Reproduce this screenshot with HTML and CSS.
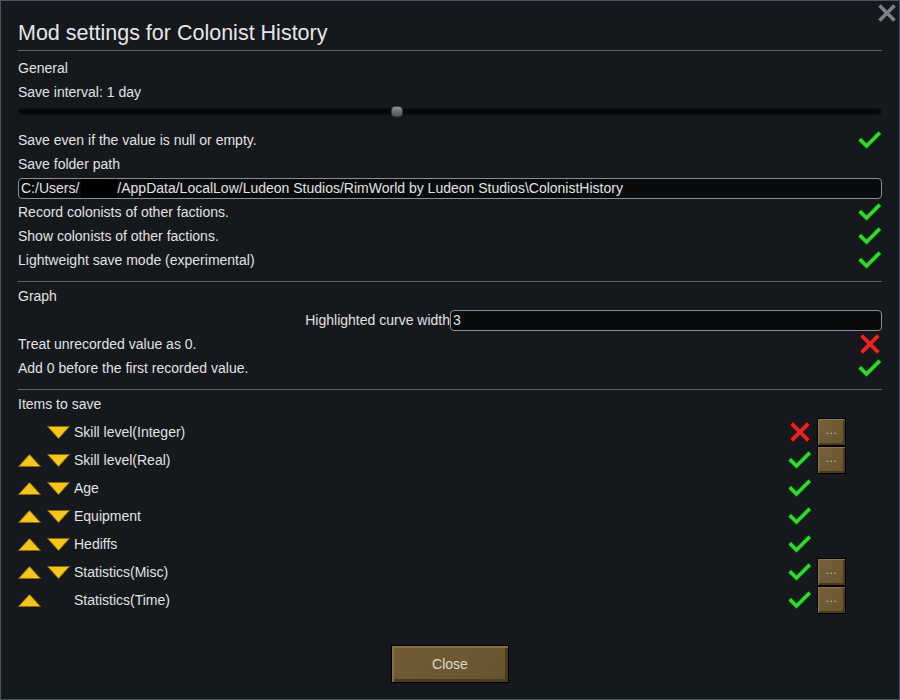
FILE: index.html
```html
<!DOCTYPE html>
<html>
<head>
<meta charset="utf-8">
<link rel="stylesheet" href="styles.css">
</head>
<body>
<div class="window">
  <div class="close-x">
    <svg viewBox="0 0 20 20" width="20" height="20"><path d="M2.5 2.5 L17.5 17.5 M17.5 2.5 L2.5 17.5" stroke="#7f8184" stroke-width="3.6" fill="none"/></svg>
  </div>
  <h1 class="title">Mod settings for Colonist History</h1>
  <div class="sep sep-top"></div>

  <div class="row"><span>General</span></div>
  <div class="row"><span>Save interval: 1 day</span></div>
  <div class="slider"><div class="track"><div class="handle" style="left: 43.2%"></div></div></div>
  <div class="row"><span>Save even if the value is null or empty.</span>
    <svg class="icon" viewBox="0 0 24 24"><polyline points="3,12.5 8.5,18 20.5,6" class="chk-o"/><polyline points="3,12.5 8.5,18 20.5,6" class="chk-i"/></svg>
  </div>
  <div class="row"><span>Save folder path</span></div>
  <div class="row-field"><div class="field">C:/Users/<span class="redact"></span>/AppData/LocalLow/Ludeon Studios/RimWorld by Ludeon Studios\ColonistHistory</div></div>
  <div class="row"><span>Record colonists of other factions.</span>
    <svg class="icon" viewBox="0 0 24 24"><polyline points="3,12.5 8.5,18 20.5,6" class="chk-o"/><polyline points="3,12.5 8.5,18 20.5,6" class="chk-i"/></svg>
  </div>
  <div class="row"><span>Show colonists of other factions.</span>
    <svg class="icon" viewBox="0 0 24 24"><polyline points="3,12.5 8.5,18 20.5,6" class="chk-o"/><polyline points="3,12.5 8.5,18 20.5,6" class="chk-i"/></svg>
  </div>
  <div class="row"><span>Lightweight save mode (experimental)</span>
    <svg class="icon" viewBox="0 0 24 24"><polyline points="3,12.5 8.5,18 20.5,6" class="chk-o"/><polyline points="3,12.5 8.5,18 20.5,6" class="chk-i"/></svg>
  </div>

  <div class="sep sep-mid"></div>
  <div class="row"><span>Graph</span></div>
  <div class="half-row">
    <span class="half-label">Highlighted curve width</span>
    <div class="field">3</div>
  </div>
  <div class="row"><span>Treat unrecorded value as 0.</span>
    <svg class="icon" viewBox="0 0 24 24"><path d="M5 5 L19 19 M19 5 L5 19" class="x-o"/><path d="M5 5 L19 19 M19 5 L5 19" class="x-i"/></svg>
  </div>
  <div class="row"><span>Add 0 before the first recorded value.</span>
    <svg class="icon" viewBox="0 0 24 24"><polyline points="3,12.5 8.5,18 20.5,6" class="chk-o"/><polyline points="3,12.5 8.5,18 20.5,6" class="chk-i"/></svg>
  </div>

  <div class="sep sep-mid"></div>
  <div class="row"><span>Items to save</span></div>

  <div class="items">
    <div class="item">
      <span></span>
      <svg class="arrow down" viewBox="0 0 23 13"><polygon points="0.5,0.5 22.5,0.5 11.5,12.5"/></svg>
      <span class="label">Skill level(Integer)</span>
      <svg class="icon" viewBox="0 0 24 24"><path d="M5 5 L19 19 M19 5 L5 19" class="x-o"/><path d="M5 5 L19 19 M19 5 L5 19" class="x-i"/></svg>
      <div class="dots">...</div>
    </div>
    <div class="item">
      <svg class="arrow up" viewBox="0 0 23 13"><polygon points="0.5,12.5 11.5,0.5 22.5,12.5"/></svg>
      <svg class="arrow down" viewBox="0 0 23 13"><polygon points="0.5,0.5 22.5,0.5 11.5,12.5"/></svg>
      <span class="label">Skill level(Real)</span>
      <svg class="icon" viewBox="0 0 24 24"><polyline points="3,12.5 8.5,18 20.5,6" class="chk-o"/><polyline points="3,12.5 8.5,18 20.5,6" class="chk-i"/></svg>
      <div class="dots">...</div>
    </div>
    <div class="item">
      <svg class="arrow up" viewBox="0 0 23 13"><polygon points="0.5,12.5 11.5,0.5 22.5,12.5"/></svg>
      <svg class="arrow down" viewBox="0 0 23 13"><polygon points="0.5,0.5 22.5,0.5 11.5,12.5"/></svg>
      <span class="label">Age</span>
      <svg class="icon" viewBox="0 0 24 24"><polyline points="3,12.5 8.5,18 20.5,6" class="chk-o"/><polyline points="3,12.5 8.5,18 20.5,6" class="chk-i"/></svg>
      <span></span>
    </div>
    <div class="item">
      <svg class="arrow up" viewBox="0 0 23 13"><polygon points="0.5,12.5 11.5,0.5 22.5,12.5"/></svg>
      <svg class="arrow down" viewBox="0 0 23 13"><polygon points="0.5,0.5 22.5,0.5 11.5,12.5"/></svg>
      <span class="label">Equipment</span>
      <svg class="icon" viewBox="0 0 24 24"><polyline points="3,12.5 8.5,18 20.5,6" class="chk-o"/><polyline points="3,12.5 8.5,18 20.5,6" class="chk-i"/></svg>
      <span></span>
    </div>
    <div class="item">
      <svg class="arrow up" viewBox="0 0 23 13"><polygon points="0.5,12.5 11.5,0.5 22.5,12.5"/></svg>
      <svg class="arrow down" viewBox="0 0 23 13"><polygon points="0.5,0.5 22.5,0.5 11.5,12.5"/></svg>
      <span class="label">Hediffs</span>
      <svg class="icon" viewBox="0 0 24 24"><polyline points="3,12.5 8.5,18 20.5,6" class="chk-o"/><polyline points="3,12.5 8.5,18 20.5,6" class="chk-i"/></svg>
      <span></span>
    </div>
    <div class="item">
      <svg class="arrow up" viewBox="0 0 23 13"><polygon points="0.5,12.5 11.5,0.5 22.5,12.5"/></svg>
      <svg class="arrow down" viewBox="0 0 23 13"><polygon points="0.5,0.5 22.5,0.5 11.5,12.5"/></svg>
      <span class="label">Statistics(Misc)</span>
      <svg class="icon" viewBox="0 0 24 24"><polyline points="3,12.5 8.5,18 20.5,6" class="chk-o"/><polyline points="3,12.5 8.5,18 20.5,6" class="chk-i"/></svg>
      <div class="dots">...</div>
    </div>
    <div class="item">
      <svg class="arrow up" viewBox="0 0 23 13"><polygon points="0.5,12.5 11.5,0.5 22.5,12.5"/></svg>
      <span></span>
      <span class="label">Statistics(Time)</span>
      <svg class="icon" viewBox="0 0 24 24"><polyline points="3,12.5 8.5,18 20.5,6" class="chk-o"/><polyline points="3,12.5 8.5,18 20.5,6" class="chk-i"/></svg>
      <div class="dots">...</div>
    </div>
  </div>

  <div class="close-btn">Close</div>
</div>
</body>
</html>
```

FILE: styles.css
```css
html, body {
  margin: 0;
  padding: 0;
  background: #15181d;
}

.window {
  position: relative;
  width: 900px;
  height: 700px;
  box-sizing: border-box;
  border: 1px solid #4d535c;
  background: #15181d;
  padding: 16px 17px 0 17px;
  color: #e2e2e2;
  font-family: "Liberation Sans", Arial, sans-serif;
  font-size: 14px;
}

.close-x {
  position: absolute;
  top: 2px;
  right: 2px;
  width: 20px;
  height: 20px;
}

.close-x svg {
  display: block;
}

.title {
  margin: 0;
  font-size: 21.5px;
  font-weight: normal;
  line-height: 33px;
  height: 33px;
  color: #e6e6e6;
}

.sep {
  height: 1px;
  background: #606367;
}

.sep-top {
  margin-bottom: 5px;
}

.sep-mid {
  margin: 9px 0 2px 0;
}

.row {
  height: 24px;
  line-height: 24px;
  display: flex;
  align-items: center;
  justify-content: space-between;
  white-space: nowrap;
}

.icon {
  display: block;
  width: 24px;
  height: 24px;
}

.chk-o {
  fill: none;
  stroke: #0c2f0c;
  stroke-width: 6.5;
  stroke-linecap: square;
  stroke-linejoin: miter;
}

.chk-i {
  fill: none;
  stroke: #36d536;
  stroke-width: 3.6;
  stroke-linecap: square;
  stroke-linejoin: miter;
}

.x-o {
  fill: none;
  stroke: #3a0c0c;
  stroke-width: 6.5;
  stroke-linecap: square;
}

.x-i {
  fill: none;
  stroke: #e12727;
  stroke-width: 3.8;
  stroke-linecap: square;
}

.slider {
  height: 24px;
  padding-top: 4px;
  box-sizing: border-box;
}

.track {
  position: relative;
  height: 7px;
  box-sizing: border-box;
  background: #07080a;
  border: 1px solid #0e1013;
  border-radius: 4px;
}

.handle {
  position: absolute;
  top: -3px;
  width: 12px;
  height: 11px;
  box-sizing: border-box;
  border-radius: 4px;
  border: 1px solid #3b3d40;
  background: linear-gradient(#9a9a9a, #6e6e6e 50%, #5a5a5a);
}

.row-field {
  height: 24px;
  padding-top: 2px;
  box-sizing: border-box;
}

.field {
  height: 21px;
  box-sizing: border-box;
  border: 1px solid #8d8f92;
  border-radius: 4px;
  background: #0a0b0d;
  padding-left: 2px;
  line-height: 19px;
  white-space: nowrap;
  overflow: hidden;
  color: #e2e2e2;
}

.redact {
  display: inline-block;
  width: 36px;
  height: 19px;
  margin-left: 2px;
  background: #000;
  vertical-align: top;
}

.half-row {
  display: grid;
  grid-template-columns: 1fr 1fr;
  height: 24px;
  padding-top: 2px;
  box-sizing: border-box;
}

.half-label {
  text-align: right;
  line-height: 21px;
  white-space: nowrap;
}

.items {
  width: 828px;
  margin-top: 2px;
}

.item {
  display: grid;
  grid-template-columns: 28px 28px 1fr 29px 29px;
  height: 28px;
  align-items: center;
  white-space: nowrap;
}

.arrow {
  display: block;
  width: 23px;
  height: 13px;
}

.arrow polygon {
  fill: #f5c61e;
  stroke: #8a6a0c;
  stroke-width: 1;
  stroke-linejoin: round;
}

.arrow.down {
  margin-left: 1px;
}

.label {
  line-height: 28px;
}

.dots {
  width: 29px;
  height: 28px;
  box-sizing: border-box;
  border: 1px solid #000;
  background: linear-gradient(135deg, #76613a, #67532f);
  box-shadow: inset 1px 1px 0 #8b7549, inset -2px -2px 0 #4a3b20;
  color: #cfc7b7;
  font-size: 12px;
  line-height: 22px;
  text-align: center;
  letter-spacing: 0.5px;
}

.close-btn {
  width: 118px;
  height: 38px;
  margin: 31px auto 0 auto;
  box-sizing: border-box;
  border: 1px solid #000;
  background: linear-gradient(135deg, #715c35, #67532f);
  box-shadow: inset 2px 2px 0 #85703f, inset -3px -3px 0 #4a3b1f;
  color: #dedad2;
  font-size: 14px;
  line-height: 36px;
  text-align: center;
}
```
